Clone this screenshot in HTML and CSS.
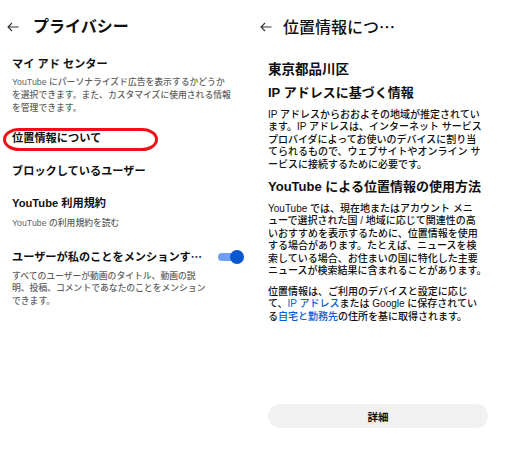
FILE: index.html
```html
<!DOCTYPE html>
<html lang="ja">
<head>
<meta charset="utf-8">
<link rel="stylesheet" href="styles.css">
</head>
<body>
<div class="page">
  <section class="screen left">
    <header class="header">
      <svg class="back" width="12" height="10" viewBox="0 0 12 10"><path d="M11.5 5H1 M5 1 L1 5 L5 9" fill="none" stroke="#333" stroke-width="1.1"/></svg>
      <h1 class="title">プライバシー</h1>
    </header>
    <div class="item item-ads">
      <div class="item-title">マイ アド センター</div>
      <div class="item-desc">YouTube にパーソナライズド広告を表示するかどうか<br>を選択できます。また、カスタマイズに使用される情報<br>を管理できます。</div>
    </div>
    <div class="item item-loc">
      <div class="item-title">位置情報について</div>
      <span class="circle"></span>
    </div>
    <div class="item item-block">
      <div class="item-title">ブロックしているユーザー</div>
    </div>
    <div class="item item-terms">
      <div class="item-title">YouTube 利用規約</div>
      <div class="item-desc small">YouTube の利用規約を読む</div>
    </div>
    <div class="item item-mention">
      <div class="mention-row">
        <div class="item-title">ユーザーが私のことをメンションす<span class="ell">…</span></div>
        <span class="toggle"><span class="knob"></span></span>
      </div>
      <div class="item-desc mention-desc">すべてのユーザーが動画のタイトル、動画の説<br>明、投稿、コメントであなたのことをメンション<br>できます。</div>
    </div>
  </section>
  <section class="screen right">
    <header class="header">
      <svg class="back" width="12" height="10" viewBox="0 0 12 10"><path d="M11.5 5H1 M5 1 L1 5 L5 9" fill="none" stroke="#333" stroke-width="1.1"/></svg>
      <h1 class="title title-r">位置情報につ<span class="ell">…</span></h1>
    </header>
    <div class="content">
      <h2 class="place">東京都品川区</h2>
      <h3 class="sub sub1">IP アドレスに基づく情報</h3>
      <p class="para p1">IP アドレスからおおよその地域が推定されてい<br>ます。IP アドレスは、インターネット サービス<br>プロバイダによってお使いのデバイスに割り当<br>てられるもので、ウェブサイトやオンライン サ<br>ービスに接続するために必要です。</p>
      <h3 class="sub sub2">YouTube による位置情報の使用方法</h3>
      <p class="para p2">YouTube では、現在地またはアカウント メニ<br>ューで選択された国 / 地域に応じて関連性の高<br>いおすすめを表示するために、位置情報を使用<br>する場合があります。たとえば、ニュースを検<br>索している場合、お住まいの国に特化した主要<br>ニュースが検索結果に含まれることがあります。</p>
      <p class="para p3">位置情報は、ご利用のデバイスと設定に応じ<br>て、<a class="link">IP アドレス</a>または Google に保存されてい<br>る<a class="link">自宅と勤務先</a>の住所を基に取得されます。</p>
      <button class="more">詳細</button>
    </div>
  </section>
</div>
</body>
</html>
```

FILE: styles.css
```css
* { box-sizing: border-box; }
html, body { margin: 0; padding: 0; background: #fff; }
body {
  font-family: "Liberation Sans", "Noto Sans CJK JP", sans-serif;
  color: #0f0f0f;
  width: 505px;
  height: 450px;
  overflow: hidden;
}
.page { display: flex; height: 450px; }
.screen { display: flex; flex-direction: column; height: 450px; }
.left { width: 253px; padding: 0 10px 0 12px; }
.right { width: 252px; padding: 0 17px 0 15px; }

.header {
  display: flex;
  align-items: center;
  height: 20px;
  margin-top: 17px;
  margin-left: -5px;
}
.right .header { margin-left: -8px; }
.back { flex: none; margin-right: 14px; }
.right .back { margin-right: 11px; }
.title {
  margin: 0;
  font-size: 16px;
  line-height: 20px;
  font-weight: 700;
  white-space: nowrap;
}
.title-r { font-weight: 500; }
.ell { font-family: "Noto Sans CJK JP", sans-serif; }

.item { position: relative; }
.item-title {
  font-size: 11.2px;
  line-height: 14px;
  font-weight: 700;
  white-space: nowrap;
}
.item-desc {
  font-size: 8.8px;
  line-height: 13px;
  font-weight: 500;
  color: #5f5f5f;
  white-space: nowrap;
}
.item-ads { margin-top: 20px; }
.item-ads .item-desc { margin-top: 4.5px; }
.item-loc { margin-top: 16.5px; }
.item-block { margin-top: 19px; }
.item-terms { margin-top: 18px; }
.item-terms .item-desc { margin-top: 6.5px; }
.item-mention { margin-top: 19.5px; }
.mention-row { display: flex; align-items: center; justify-content: space-between; }
.mention-desc { margin-top: 5.5px; line-height: 12.5px; }

.circle {
  position: absolute;
  left: -9px;
  top: -3.5px;
  width: 155px;
  height: 23px;
  border: 3px solid #ee0f18;
  border-radius: 16px / 11.5px;
}

.toggle {
  position: relative;
  flex: none;
  width: 24px;
  height: 8px;
  margin-right: 1px;
  border-radius: 4px;
  background: #6f9ff0;
}
.knob {
  position: absolute;
  right: -2px;
  top: -3px;
  width: 14px;
  height: 14px;
  border-radius: 50%;
  background: #0b57d0;
}

.content { display: flex; flex-direction: column; flex: 1; padding-bottom: 22px; }
.place {
  margin: 24px 0 0;
  font-size: 13.5px;
  line-height: 18px;
  font-weight: 700;
}
.sub {
  margin: 0;
  font-size: 13px;
  line-height: 18px;
  font-weight: 700;
  white-space: nowrap;
}
.sub1 { margin-top: 5px; }
.sub2 { margin-top: 6.75px; }
.para {
  margin: 6.75px 0 0;
  font-size: 10px;
  line-height: 12.5px;
  font-weight: 500;
  white-space: nowrap;
}
.p3 { margin-top: 8px; }
.link { color: #065fd4; text-decoration: none; }
.more {
  margin-top: auto;
  width: 220px;
  height: 24px;
  border: none;
  border-radius: 12px;
  background: #f1f1f1;
  font-family: "Liberation Sans", "Noto Sans CJK JP", sans-serif;
  font-size: 10.5px;
  font-weight: 700;
  color: #0f0f0f;
  padding: 0;
}
```
